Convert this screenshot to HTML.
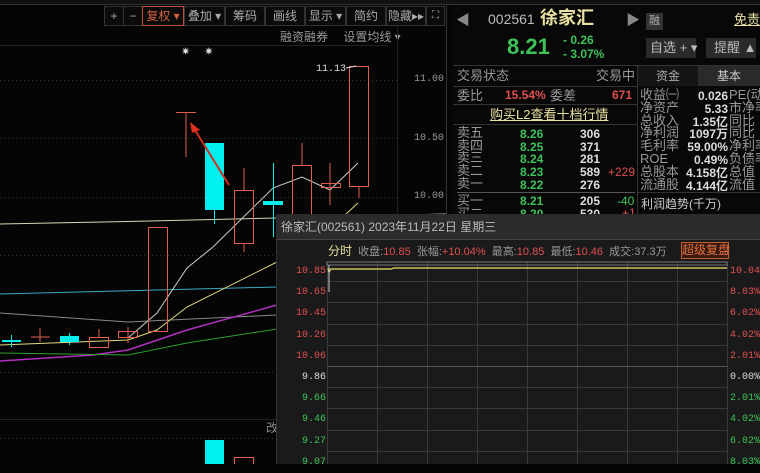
<!DOCTYPE html>
<html><head><meta charset="utf-8">
<style>
*{margin:0;padding:0;box-sizing:border-box}
body{width:760px;height:464px;background:#050505;overflow:hidden;position:relative;font-family:"Liberation Sans","Noto Sans CJK SC",sans-serif;color:#ccc}
.a{position:absolute;white-space:nowrap;line-height:1}
.m{font-family:"Liberation Mono","Noto Sans CJK SC",monospace}
.tb{position:absolute;top:6px;height:20px;border:1px solid #333;background:#0b0b0b;color:#aaa;font-size:12px;text-align:center;line-height:18px}
.g{color:#3ec35a}.r{color:#e05050}.w{color:#ddd}
.lbl{color:#999;font-size:13px}
</style></head><body>
<div class="a" style="left:0;top:0;width:760px;height:5px;background:#111;border-bottom:1px solid #333"></div>
<div class="tb" style="left:104px;width:20px">+</div>
<div class="tb" style="left:123px;width:20px">−</div>
<div class="tb" style="left:142px;width:42px;border-color:#c0503a;color:#d06040">复权 ▾</div>
<div class="tb" style="left:184px;width:41px">叠加 ▾</div>
<div class="tb" style="left:225px;width:40px">筹码</div>
<div class="tb" style="left:265px;width:40px">画线</div>
<div class="tb" style="left:305px;width:41px">显示 ▾</div>
<div class="tb" style="left:346px;width:40px">简约</div>
<div class="tb" style="left:386px;width:40px">隐藏▸▸</div>
<div class="tb" style="left:426px;width:19px;font-size:10px">⛶</div>
<div class="a" style="left:280px;top:31px;font-size:12px;color:#999">融资融券　 设置均线 ▾</div>
<div class="a" style="left:0;top:45px;width:388px;height:1px;background:#222"></div>
<div class="a" style="left:181px;top:47px;font-size:11px;color:#ddd">✷　 ✷</div>
<div class="a m" style="left:316px;top:65px;font-size:10px;color:#ddd">11.13</div>
<div class="a" style="left:397px;top:26px;width:1px;height:438px;background:#222"></div>
<div class="a" style="left:446px;top:5px;width:1px;height:459px;background:#333"></div>
<div class="a m" style="left:414px;top:75px;font-size:10px;color:#999">11.00</div>
<div class="a m" style="left:414px;top:134px;font-size:10px;color:#999">10.50</div>
<div class="a m" style="left:414px;top:192px;font-size:10px;color:#999">10.00</div>
<div class="a" style="left:266px;top:422px;font-size:12px;color:#888">改</div>
<svg class="a" style="left:0;top:0" width="446" height="464">
<g stroke="#333" stroke-dasharray="1,3" stroke-width="1">
<line x1="0" y1="80.5" x2="397" y2="80.5"/><line x1="0" y1="138.5" x2="397" y2="138.5"/><line x1="0" y1="197.5" x2="397" y2="197.5"/><line x1="0" y1="255.5" x2="397" y2="255.5"/><line x1="0" y1="372.5" x2="397" y2="372.5"/><line x1="0" y1="438.5" x2="397" y2="438.5"/>
</g>
<line x1="0" y1="419.5" x2="397" y2="419.5" stroke="#222"/>
<polyline fill="none" stroke="#d8d6b0" points="0,224 150,221 277,218 446,214"/>
<polyline fill="none" stroke="#3aa8c0" points="0,294 277,287"/>
<polyline fill="none" stroke="#888" points="0,313 128,322 277,315"/>
<polyline fill="none" stroke="#b030c0" stroke-width="1.5" points="0,361 93,355 128,350 187,330 277,305"/>
<polyline fill="none" stroke="#30a030" points="0,353 128,355 187,343 277,329"/>
<polyline fill="none" stroke="#e0d880" points="0,345 128,340 157,330 187,307 277,262"/>
<polyline fill="none" stroke="#e0d880" points="346,214 358,203"/>
<polyline fill="none" stroke="#ccc" points="128,338 157,313 187,268 213,247 273,188 302,177 330,190 358,163"/>
<g stroke="#e06050" fill="none">
<line x1="31" y1="337" x2="50" y2="337"/><line x1="40" y1="328" x2="40" y2="342"/>
<rect x="89.5" y="337.5" width="19" height="10"/><line x1="99" y1="329" x2="99" y2="337"/>
<rect x="118.5" y="331.5" width="19" height="6"/><line x1="128" y1="327" x2="128" y2="343"/>
<rect x="148.5" y="227.5" width="19" height="104"/>
<line x1="176" y1="112.5" x2="196" y2="112.5"/><line x1="186" y1="112" x2="186" y2="157"/>
<rect x="234.5" y="190.5" width="19" height="53"/><line x1="244" y1="168" x2="244" y2="190"/><line x1="244" y1="243" x2="244" y2="252"/>
<rect x="292.5" y="165.5" width="19" height="60"/><line x1="302" y1="143" x2="302" y2="165"/>
<rect x="321.5" y="183.5" width="19" height="4"/><line x1="330" y1="163" x2="330" y2="205"/>
<rect x="349.5" y="66.5" width="19" height="120"/><line x1="359" y1="187" x2="359" y2="198"/>
<rect x="234.5" y="457.5" width="19" height="10"/>
</g>
<g fill="#00f0f0">
<rect x="2" y="340" width="19" height="2"/><rect x="11" y="335" width="1" height="12"/>
<rect x="60" y="336" width="19" height="6"/><rect x="69" y="333" width="1" height="12"/>
<rect x="205" y="143" width="19" height="67"/><rect x="214" y="210" width="1" height="14"/>
<rect x="263" y="201" width="20" height="4"/><rect x="273" y="163" width="1" height="74"/>
<rect x="205" y="440" width="19" height="24"/>
</g>
<line x1="229" y1="185" x2="193" y2="127" stroke="#d03020" stroke-width="2"/>
<polygon points="190,122 200,130 192,133" fill="#e03020"/>
<line x1="346" y1="68" x2="356" y2="66" stroke="#ddd"/>
</svg>
<div class="a" style="left:453px;top:5px;width:307px;height:210px;background:#080808"></div>
<div class="a" style="left:456px;top:13px;font-size:14px;color:#888">◀</div>
<div class="a" style="left:488px;top:12px;font-size:14px;color:#bbb">002561</div>
<div class="a" style="left:540px;top:9px;font-size:18px;color:#e8e0a0;font-weight:bold">徐家汇</div>
<div class="a" style="left:626px;top:13px;font-size:14px;color:#888">▶</div>
<div class="a" style="left:646px;top:13px;width:17px;height:17px;background:#333;color:#aaa;font-size:11px;text-align:center;line-height:17px">融</div>
<div class="a" style="left:734px;top:13px;font-size:13px;color:#e8e0a0;text-decoration:underline">免责</div>
<div class="a" style="left:507px;top:36px;font-size:22px;color:#3ec35a;font-weight:bold">8.21</div>
<div class="a g" style="left:563px;top:34px;font-size:12px;font-weight:bold">- 0.26</div>
<div class="a g" style="left:563px;top:48px;font-size:12px;font-weight:bold">- 3.07%</div>
<div class="a" style="left:646px;top:38px;width:50px;height:20px;background:#2a2a2a;color:#bbb;font-size:13px;line-height:20px;padding-left:4px">自选 + ▾</div>
<div class="a" style="left:706px;top:38px;width:50px;height:20px;background:#2a2a2a;color:#bbb;font-size:13px;line-height:20px;padding-left:8px">提醒 ▲</div>
<div class="a" style="left:453px;top:65px;width:307px;height:1px;background:#333"></div>
<div class="a" style="left:453px;top:86px;width:185px;height:1px;background:#333"></div>
<div class="a" style="left:453px;top:104px;width:185px;height:1px;background:#333"></div>
<div class="a" style="left:453px;top:124px;width:185px;height:1px;background:#333"></div>
<div class="a" style="left:637px;top:65px;width:1px;height:150px;background:#333"></div>
<div class="a lbl" style="left:457px;top:69px">交易状态</div>
<div class="a lbl" style="left:596px;top:69px">交易中</div>
<div class="a lbl" style="left:457px;top:89px">委比</div>
<div class="a r" style="left:505px;top:89px;font-size:12px;font-weight:bold">15.54%</div>
<div class="a lbl" style="left:550px;top:89px">委差</div>
<div class="a r" style="left:612px;top:89px;font-size:12px;font-weight:bold">671</div>
<div class="a" style="left:490px;top:108px;font-size:13px;color:#e8e0a0;text-decoration:underline">购买L2查看十档行情</div>
<div class="a lbl" style="left:457px;top:127px;line-height:12.7px;white-space:normal;width:30px">卖五 卖四 卖三 卖二 卖一</div>
<div class="a g" style="left:520px;top:128px;font-size:12px;font-weight:bold;line-height:12.7px;white-space:normal;width:30px">8.26 8.25 8.24 8.23 8.22</div>
<div class="a w" style="left:580px;top:128px;font-size:12px;font-weight:bold;line-height:12.7px;white-space:normal;width:25px">306 371 281 589 276</div>
<div class="a r" style="left:608px;top:166px;font-size:12px">+229</div>
<div class="a" style="left:457px;top:192px;width:178px;height:1px;background:#555"></div>
<div class="a lbl" style="left:457px;top:195px;line-height:12.7px;white-space:normal;width:30px">买一 买二</div>
<div class="a g" style="left:520px;top:195px;font-size:12px;font-weight:bold;line-height:12.7px;white-space:normal;width:30px">8.21 8.20</div>
<div class="a w" style="left:580px;top:195px;font-size:12px;font-weight:bold;line-height:12.7px;white-space:normal;width:25px">205 530</div>
<div class="a g" style="left:617px;top:195px;font-size:12px">-40</div>
<div class="a r" style="left:622px;top:207px;font-size:12px">+1</div>
<div class="a" style="left:638px;top:66px;width:60px;height:20px;background:#151515;color:#aaa;font-size:12px;text-align:center;line-height:20px">资金</div>
<div class="a" style="left:698px;top:66px;width:62px;height:20px;background:#2a2a2a;color:#ccc;font-size:12px;text-align:center;line-height:20px">基本</div>
<div class="a lbl" style="left:640px;top:89px;line-height:12.8px;white-space:normal;width:40px">收益㈠ 净资产 总收入 净利润 毛利率 ROE 总股本 流通股</div>
<div class="a w" style="left:680px;top:90px;font-size:12px;font-weight:bold;line-height:12.8px;text-align:right;width:48px;white-space:pre">0.026
5.33
1.35亿
1097万
59.00%
0.49%
4.158亿
4.144亿</div>
<div class="a lbl" style="left:729px;top:89px;line-height:12.8px;white-space:pre">PE(动
市净率
同比
同比
净利率
负债率
总值
流值</div>
<div class="a" style="left:638px;top:192px;width:122px;height:1px;background:#333"></div>
<div class="a" style="left:641px;top:198px;font-size:12px;color:#ccc">利润趋势(千万)</div>
<div class="a" style="left:276px;top:214px;width:484px;height:250px;background:#1a1a1a;border-left:1px solid #333"></div>
<div class="a" style="left:276px;top:214px;width:484px;height:26px;background:#2b2b2b;border-bottom:1px solid #444"></div>
<div class="a" style="left:281px;top:221px;font-size:12px;color:#bbb">徐家汇(002561) 2023年11月22日 星期三</div>
<div class="a" style="left:328px;top:245px;font-size:11px;color:#999"><span style="color:#e8e0a0;font-size:12px">分时</span>&nbsp; 收盘:<span class="r">10.85</span>&nbsp; 张幅:<span class="r">+10.04%</span>&nbsp; 最高:<span class="r">10.85</span>&nbsp; 最低:<span class="r">10.46</span>&nbsp; 成交:37.3万</div>
<div class="a" style="left:681px;top:242px;width:48px;height:17px;border:1px solid #c06030;background:#3a1a10;color:#e07040;font-size:12px;text-align:center;line-height:15px">超级复盘</div>
<svg class="a" style="left:276px;top:240px" width="484" height="224">
<g stroke="#3a3a3a">
<line x1="51.5" y1="22" x2="51.5" y2="224"/><line x1="101.5" y1="22" x2="101.5" y2="224"/><line x1="151.5" y1="22" x2="151.5" y2="224"/><line x1="201.5" y1="22" x2="201.5" y2="224"/><line x1="251.5" y1="22" x2="251.5" y2="224"/><line x1="301.5" y1="22" x2="301.5" y2="224"/><line x1="351.5" y1="22" x2="351.5" y2="224"/><line x1="401.5" y1="22" x2="401.5" y2="224"/><line x1="451.5" y1="22" x2="451.5" y2="224"/>
<line x1="51" y1="41.5" x2="451" y2="41.5"/><line x1="51" y1="62.5" x2="451" y2="62.5"/><line x1="51" y1="84.5" x2="451" y2="84.5"/><line x1="51" y1="105.5" x2="451" y2="105.5"/><line x1="51" y1="126.5" x2="451" y2="126.5" stroke="#555"/><line x1="51" y1="147.5" x2="451" y2="147.5"/><line x1="51" y1="168.5" x2="451" y2="168.5"/><line x1="51" y1="190.5" x2="451" y2="190.5"/><line x1="51" y1="211.5" x2="451" y2="211.5"/>
</g>
<rect x="51" y="22" width="400" height="3" fill="none" stroke="#777"/>
<polyline fill="none" stroke="#c8c060" stroke-width="1.5" points="52,28 53,32 55,29 115,29 118,28 451,28"/>
<line x1="53" y1="25" x2="53" y2="52" stroke="#ccc"/>
</svg>
<div class="a m" style="left:290px;top:261px;font-size:10px;line-height:21.2px;text-align:right;width:36px;white-space:pre"><span class="r">10.85</span>
<span class="r">10.65</span>
<span class="r">10.45</span>
<span class="r">10.26</span>
<span class="r">10.06</span>
<span class="w">9.86</span>
<span class="g">9.66</span>
<span class="g">9.46</span>
<span class="g">9.27</span>
<span class="g">9.07</span></div>
<div class="a m" style="left:730px;top:261px;font-size:10px;line-height:21.2px;white-space:pre"><span class="r">10.04%</span>
<span class="r">8.03%</span>
<span class="r">6.02%</span>
<span class="r">4.02%</span>
<span class="r">2.01%</span>
<span class="w">0.00%</span>
<span class="g">2.01%</span>
<span class="g">4.02%</span>
<span class="g">6.02%</span>
<span class="g">8.03%</span></div>
</body></html>
